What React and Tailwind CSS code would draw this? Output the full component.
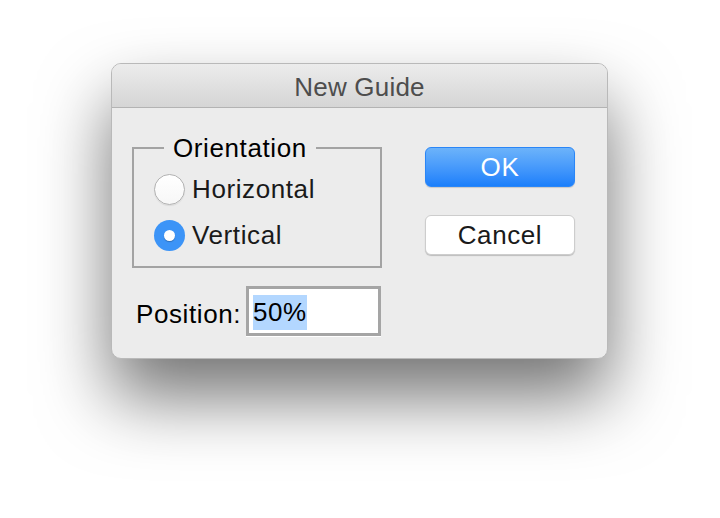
export default function App() {
    return (
        <div
            className="min-h-[518px] w-[720px] bg-white pl-[111px] pt-[63px]"
            style={{ fontFamily: '"Liberation Sans", Arial, sans-serif' }}
        >
            <div className="flex h-[296px] w-[497px] flex-col overflow-hidden rounded-[10px] border border-[#b9b9b9] bg-[#ececec] shadow-[0_38px_70px_rgba(0,0,0,0.55)]">
                {/* title bar */}
                <div className="flex h-[44px] shrink-0 items-center justify-center border-b border-[#b3b3b3] bg-gradient-to-b from-[#ececec] to-[#d5d5d5] pt-[2px]">
                    <span className="text-[26px] leading-none tracking-[0.2px] text-[#4d4d4d]">New Guide</span>
                </div>

                <div className="flex pl-[20px] pt-[39px] tracking-[0.6px]">
                    <div className="flex flex-col">
                        {/* Orientation group */}
                        <div className="relative h-[121px] w-[250px] border-2 border-[#a3a3a3]">
                            <span className="absolute left-[30px] top-[-16px] bg-[#ececec] px-[9px] text-[26px] leading-[30px] text-black">
                                Orientation
                            </span>
                            <div className="flex flex-col gap-[14px] pl-[20px] pt-[24px]">
                                <label className="flex h-[32px] items-center gap-[7px]">
                                    <span className="h-[31px] w-[31px] rounded-full border border-[#b2b2b2] bg-gradient-to-b from-white to-[#f7f7f7] shadow-[0_1px_1px_rgba(0,0,0,0.08)]" />
                                    <span className="text-[26px] leading-none text-[#1a1a1a]">Horizontal</span>
                                </label>
                                <label className="flex h-[32px] items-center gap-[7px]">
                                    <span className="flex h-[31px] w-[31px] items-center justify-center rounded-full bg-[#3c94f7]">
                                        <span className="h-[11px] w-[11px] rounded-full bg-white shadow-[0_1px_1px_rgba(0,0,0,0.25)]" />
                                    </span>
                                    <span className="text-[26px] leading-none text-[#1a1a1a]">Vertical</span>
                                </label>
                            </div>
                        </div>

                        {/* Position row */}
                        <div className="mt-[18px] flex items-center">
                            <span className="ml-[4px] mt-[4px] w-[110px] text-[26px] leading-none text-black">Position:</span>
                            <div className="h-[51px] w-[135px] border-b border-white">
                                <div className="flex h-[50px] items-center border-[3px] border-[#a5a5a5] bg-white pl-[4px] pt-[2px]">
                                    <span className="bg-[#b3d7ff] py-[4px] text-[26px] leading-[27px] text-black">50%</span>
                                </div>
                            </div>
                        </div>
                    </div>

                    {/* buttons */}
                    <div className="ml-[43px] flex flex-col gap-[28px]">
                        <button className="flex h-[40px] w-[150px] items-center justify-center rounded-[6px] border border-[#2a86f7] bg-gradient-to-b from-[#6cb3fa] to-[#1a7ffb] text-[26px] leading-none text-white shadow-[0_1px_1px_rgba(0,0,0,0.15)]">
                            OK
                        </button>
                        <button className="flex h-[40px] w-[150px] items-center justify-center rounded-[6px] border border-[#cdcdcd] bg-white text-[26px] leading-none text-[#1a1a1a] shadow-[0_1px_1px_rgba(0,0,0,0.2)]">
                            Cancel
                        </button>
                    </div>
                </div>
            </div>
        </div>
    );
}
